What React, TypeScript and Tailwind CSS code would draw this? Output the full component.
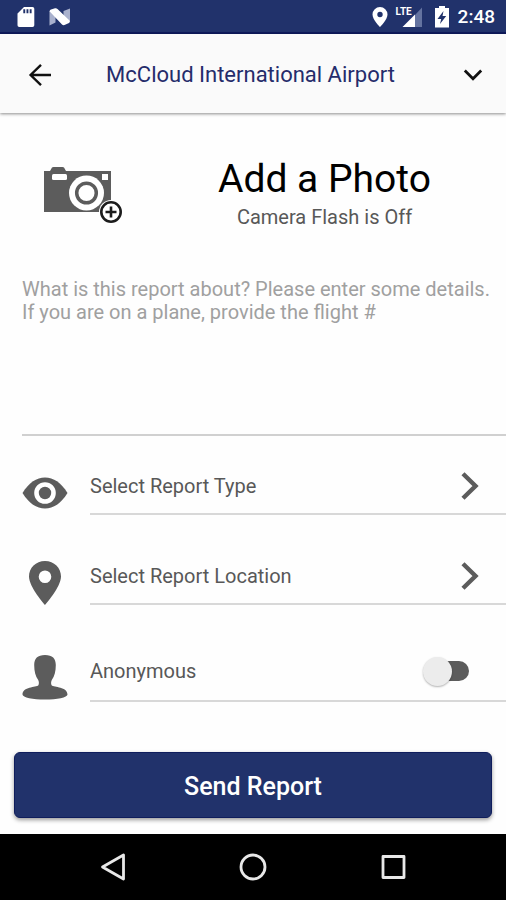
import { useState, type ReactNode } from "react";

function StatusBar() {
  return (
    <div className="flex h-[34px] items-center justify-between border-b-2 border-[#0f1a5c] bg-[#21326b] pt-0.5 pr-[11px] pl-[17px] text-white">
      <div className="flex items-center gap-[14px]">
        <svg width="18" height="22" viewBox="0 0 18 22" aria-label="SD card">
          <path
            fill="#fff"
            fillRule="evenodd"
            d="M7 1h8.500a1.800 1.800 0 0 1 1.800 1.800v16.400a1.800 1.800 0 0 1-1.800 1.800H2.300a1.800 1.800 0 0 1-1.800-1.800V7.500zM6.300 3.300v4h1.900v-4zM9.500 3.300v4h1.900v-4zM12.700 3.300v4h1.900v-4z"
          />
        </svg>
        <svg width="22" height="20" viewBox="0 0 22 20" aria-label="Android N">
          <path fill="#a9b1cd" d="M.5 4L6.500 7v8.500L.5 18.500zM14.500 4L21 1.500v14l-6.500-3z" />
          <path fill="#fff" d="M.5 4.200Q1 3 2 2.600L6 1.300Q7.500 1 8.500 2L20.500 13.500Q21 15 20 16l-4.500 2Q14 18.500 13 17.500z" />
        </svg>
      </div>
      <div className="flex items-center">
        <svg width="16" height="20" viewBox="0 0 16 20" aria-label="Location">
          <path
            fill="#fff"
            fillRule="evenodd"
            d="M8 0a7.500 7.500 0 0 1 7.500 7.500C15.500 13 8 20 8 20S.5 13 .5 7.500A7.500 7.500 0 0 1 8 0zm0 4.800a2.700 2.700 0 1 0 0 5.400 2.700 2.700 0 0 0 0-5.400z"
          />
        </svg>
        <div className="relative ml-2 h-5 w-[27px]">
          <svg className="absolute right-0 bottom-0" width="21" height="20" viewBox="0 0 21 20" aria-hidden="true">
            <path fill="#6473a0" d="M13 8l7-7.500v19.500h-7z" />
            <path fill="#fff" d="M.5 20L13 7.500V20z" />
          </svg>
          <span className="absolute top-0 left-0 text-[10px] leading-[10px] font-bold">LTE</span>
        </div>
        <svg className="ml-3" width="14" height="22" viewBox="0 0 14 22" aria-label="Battery charging">
          <path
            fill="#fff"
            fillRule="evenodd"
            d="M4 0h6v2h4v19.500H0V2h4zM8.500 5L2.500 13h3.700l-1.200 5 6.200-8H7.500z"
          />
        </svg>
        <span className="ml-[9px] text-[19px] leading-6 font-medium">2:48</span>
      </div>
    </div>
  );
}

function Header() {
  return (
    <header className="z-10 flex h-[79px] items-center bg-[#fafafa] pt-0.5 pr-[19px] pl-[26px] shadow-[0_1px_3px_rgba(0,0,0,0.45)]">
      <button type="button" aria-label="Back" className="flex h-12 w-7 items-center justify-center">
        <svg width="24" height="24" viewBox="0 0 24 24" fill="none" stroke="#111" strokeWidth="2.400">
          <path d="M23 12H2.500M13 1.800L2.600 12 13 22.200" />
        </svg>
      </button>
      <h1 className="flex-1 pr-3 text-center text-[22px] leading-8 text-[#252c6b]">McCloud International Airport</h1>
      <button type="button" aria-label="Choose airport" className="flex h-12 w-7 items-center justify-center">
        <svg width="20" height="12" viewBox="0 0 20 12" fill="none" stroke="#111" strokeWidth="2.800">
          <path d="M1.800 1.500L10 9.700l8.200-8.200" />
        </svg>
      </button>
    </header>
  );
}

function CameraIcon() {
  return (
    <svg width="80" height="58" viewBox="0 0 80 58" aria-hidden="true">
      <path fill="#5c5c5c" d="M1 5h6l2-3.500Q9.500 1 10.500 1h9q1 0 1.500.5L23 5h45v41H1z" />
      <rect x="9" y="8" width="15" height="6" rx="1.500" fill="#fff" />
      <rect x="59" y="8" width="6" height="6" fill="#fff" />
      <circle cx="43.500" cy="27" r="17.500" fill="#fff" />
      <circle cx="43.500" cy="27" r="9.800" fill="none" stroke="#5c5c5c" strokeWidth="3.500" />
      <circle cx="68" cy="46" r="12" fill="#fff" />
      <circle cx="68" cy="46" r="9.700" fill="#fff" stroke="#1c1c1c" strokeWidth="2.600" />
      <path d="M68 40.500v11M62.500 46h11" stroke="#1c1c1c" strokeWidth="2.600" />
    </svg>
  );
}

function EyeIcon() {
  return (
    <svg width="46" height="44" viewBox="0 0 46 44" aria-hidden="true">
      <path fill="#5c5c5c" d="M.5 22C7 11.500 14.500 6.500 23 6.500S39 11.500 45.500 22C39 32.500 31.500 37.500 23 37.500S7 32.500.5 22z" />
      <circle cx="23" cy="22" r="8.500" fill="#5c5c5c" stroke="#fff" strokeWidth="4.600" />
    </svg>
  );
}

function PinIcon() {
  return (
    <svg width="46" height="44" viewBox="0 0 46 44" aria-hidden="true">
      <path
        fill="#5c5c5c"
        fillRule="evenodd"
        d="M23 0c9.200 0 16 7 16 15.500C39 26 23 44 23 44S7 26 7 15.500C7 7 13.800 0 23 0zm0 9.500a6.300 6.300 0 1 0 0 12.600 6.300 6.300 0 0 0 0-12.600z"
      />
    </svg>
  );
}

function PersonIcon() {
  return (
    <svg width="46" height="45" viewBox="0 0 46 45" aria-hidden="true">
      <path
        fill="#5c5c5c"
        d="M23 0c7.500 0 10.800 3.500 10.800 10 0 6-1.300 11.500-4 15-.8 1.500-1 4-.2 5.200C32 32.500 45.500 31.500 45.500 39.500c0 3-10.500 5-22.500 5s-22.500-2-22.500-5c0-8 13.500-7 15.900-9.300.8-1.200.6-3.700-.2-5.200-2.700-3.500-4-9-4-15C12.200 3.500 15.500 0 23 0z"
      />
    </svg>
  );
}

function ChevronRight() {
  return (
    <svg width="18" height="28" viewBox="0 0 18 28" fill="none" stroke="#5c5c5c" strokeWidth="4.400" aria-hidden="true">
      <path d="M2 1.800L14.500 14 2 26.200" />
    </svg>
  );
}

function PickerRow({ icon, label }: { icon: ReactNode; label: string }) {
  return (
    <button type="button" className="flex w-full items-end gap-[22px] pl-[22px] text-left">
      {icon}
      <span className="flex h-[58px] flex-1 items-center justify-between border-b-2 border-[#d8d8d8] pt-0.5 pr-[27px]">
        <span className="text-[20px] leading-6">{label}</span>
        <ChevronRight />
      </span>
    </button>
  );
}

function AnonymousRow() {
  const [on, setOn] = useState(false);
  return (
    <label className="flex w-full items-end gap-[22px] pl-[22px]">
      <span className="pb-0.5">
        <PersonIcon />
      </span>
      <span className="flex h-[58px] flex-1 items-center justify-between border-b-2 border-[#d8d8d8] pr-[37px] pb-0.5">
        <span className="text-[20px] leading-6">Anonymous</span>
        <span className="flex h-[30px] w-[46px] items-center">
          <input
            type="checkbox"
            role="switch"
            aria-label="Anonymous"
            checked={on}
            onChange={(e) => setOn(e.target.checked)}
            className="peer sr-only"
          />
          <span className="ml-2 flex h-5 w-[38px] items-center rounded-full bg-[#5c5c5c] peer-checked:bg-[#21326b] peer-checked:[&>span]:ml-2">
            <span className="-ml-2 size-[29px] shrink-0 rounded-full bg-[#ececec] shadow-[0_1px_2px_rgba(0,0,0,0.3)]" />
          </span>
        </span>
      </span>
    </label>
  );
}

function NavBar() {
  return (
    <nav className="flex h-[66px] items-center justify-center gap-28 bg-black">
      <button type="button" aria-label="Back">
        <svg width="28" height="28" viewBox="0 0 28 28" fill="none" stroke="#e8e8e8" strokeWidth="2.800" strokeLinejoin="round">
          <path d="M24.500 2v24L3.500 14z" />
        </svg>
      </button>
      <button type="button" aria-label="Home">
        <svg width="28" height="28" viewBox="0 0 28 28" fill="none" stroke="#e8e8e8" strokeWidth="2.800">
          <circle cx="14" cy="14" r="12" />
        </svg>
      </button>
      <button type="button" aria-label="Recent apps">
        <svg width="28" height="28" viewBox="0 0 28 28" fill="none" stroke="#e8e8e8" strokeWidth="2.800" strokeLinejoin="round">
          <rect x="4" y="3.500" width="21" height="21" />
        </svg>
      </button>
    </nav>
  );
}

export default function App() {
  return (
    <div className="flex min-h-screen flex-col bg-[#fefefe] font-[Roboto,sans-serif] text-[#585858]">
      <StatusBar />
      <Header />
      <main className="flex flex-1 flex-col">
        <button type="button" className="mt-10 flex items-center pl-[43px]">
          <span className="pt-2">
            <CameraIcon />
          </span>
          <span className="flex flex-1 flex-col items-center pr-5 pl-10">
            <span className="text-[39px] leading-[52px] text-black">Add a Photo</span>
            <span className="text-[20px] leading-6">Camera Flash is Off</span>
          </span>
        </button>
        <textarea
          aria-label="Report details"
          placeholder={
            "What is this report about? Please enter some details. If you are on a plane, provide the flight #"
          }
          className="mt-12 ml-[22px] h-[159px] resize-none border-b-2 border-[#d0d0d0] pt-px pr-2 text-[20px] leading-[23px] outline-none placeholder:text-[#a0a0a0]"
        />
        <div className="flex flex-col pt-[21px]">
          <PickerRow icon={<EyeIcon />} label="Select Report Type" />
          <div className="mt-8">
            <PickerRow icon={<PinIcon />} label="Select Report Location" />
          </div>
          <div className="mt-[39px]">
            <AnonymousRow />
          </div>
        </div>
        <div className="mt-auto px-[14px] pt-6 pb-4">
          <button
            type="button"
            className="h-[66px] w-full rounded-md border border-[#0f1d5c] bg-[#21326b] pt-1 text-[25px] leading-8 font-medium text-white shadow-[0_2px_4px_rgba(0,0,0,0.4)]"
          >
            Send Report
          </button>
        </div>
      </main>
      <NavBar />
    </div>
  );
}
